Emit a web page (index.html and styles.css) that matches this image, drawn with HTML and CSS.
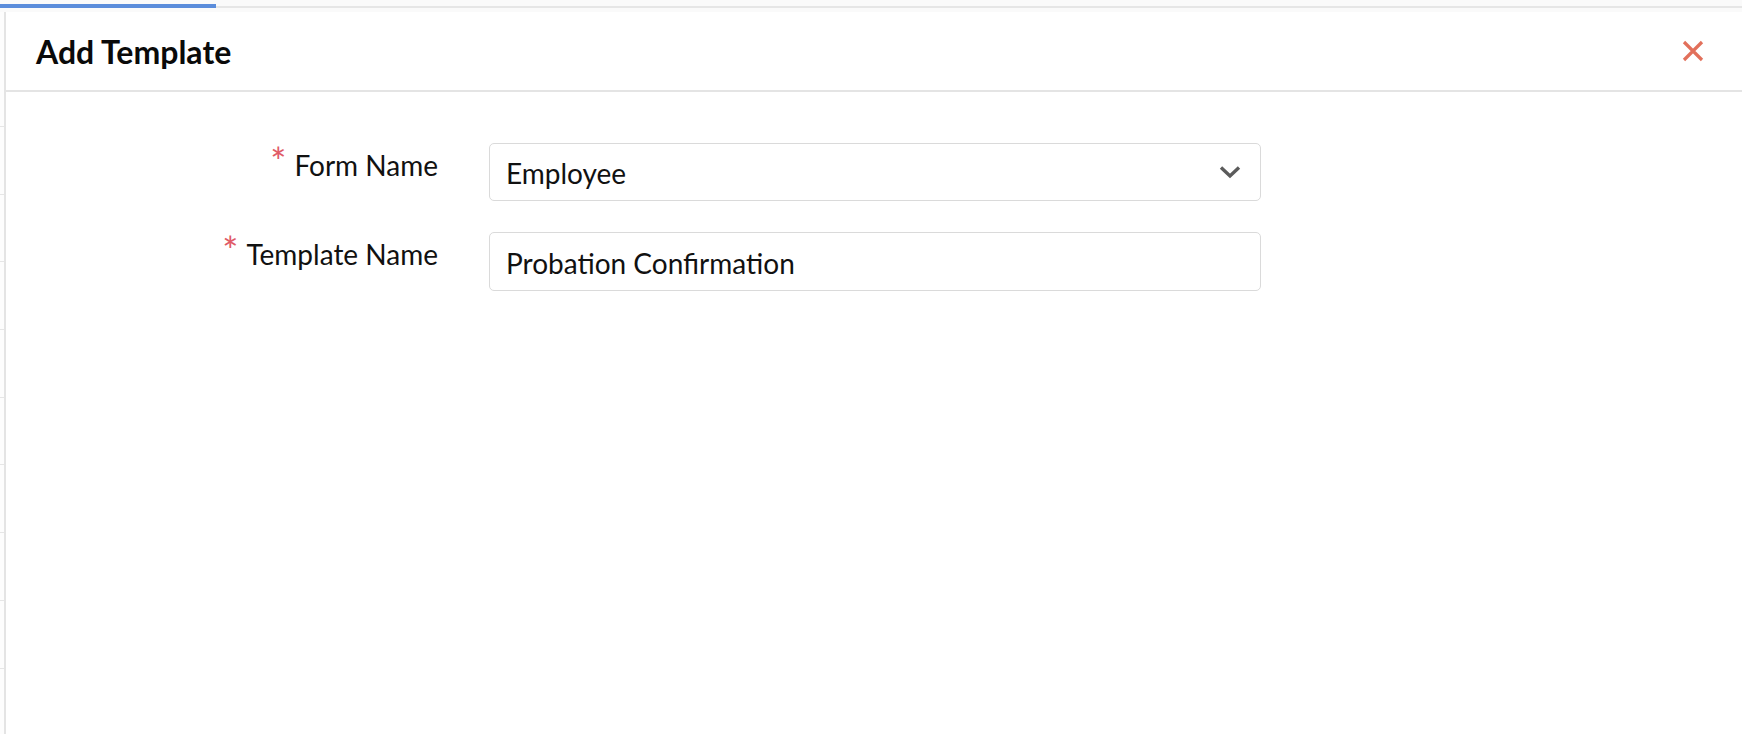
FILE: index.html
```html
<!DOCTYPE html>
<html lang="en">
<head>
<meta charset="utf-8">
<title>Add Template</title>
<link rel="stylesheet" href="styles.css">
</head>
<body>
<div class="topbar">
  <div class="track"><div class="progress"></div></div>
</div>
<div class="main">
  <div class="left-strip">
    <div class="strip-row first"></div>
    <div class="strip-row"></div>
    <div class="strip-row"></div>
    <div class="strip-row"></div>
    <div class="strip-row"></div>
    <div class="strip-row"></div>
    <div class="strip-row"></div>
    <div class="strip-row"></div>
    <div class="strip-row"></div>
  </div>
  <div class="panel">
    <div class="panel-header">
      <h1 class="title">Add Template</h1>
      <button class="close" aria-label="Close">
        <svg width="22" height="22" viewBox="0 0 22 22"><path d="M2 2 L20 20 M20 2 L2 20" stroke="#e2705b" stroke-width="3.2" stroke-linecap="butt" fill="none"/></svg>
      </button>
    </div>
    <div class="panel-body">
      <div class="form-grid">
        <label class="label"><span class="req">*</span>Form Name</label>
        <div class="field select">
          <span class="value">Employee</span>
          <svg class="chev" width="22" height="14" viewBox="0 0 22 14"><polyline points="2,2.5 11,11 20,2.5" stroke="#5b5b5b" stroke-width="3.4" fill="none"/></svg>
        </div>
        <label class="label"><span class="req">*</span>Template Name</label>
        <div class="field">
          <span class="value">Probation Confirmation</span>
        </div>
      </div>
    </div>
  </div>
</div>
</body>
</html>
```

FILE: styles.css
```css
* { box-sizing: border-box; }
html, body { margin: 0; padding: 0; }
body {
  width: 1742px;
  height: 734px;
  overflow: hidden;
  background: #fdfdfd;
  font-family: Lato, "Open Sans", sans-serif;
  color: #111;
}
.topbar {
  height: 12px;
  background: #fafafa;
  padding-top: 4px;
}
.track {
  height: 4px;
  border-bottom: 2px solid #e6e6e6;
  position: relative;
}
.progress {
  width: 216px;
  height: 4px;
  background: #5b8ddb;
}
.main {
  display: flex;
  height: 722px;
}
.left-strip {
  width: 4px;
  display: flex;
  flex-direction: column;
}
.strip-row {
  height: 67.7px;
  flex: none;
  border-bottom: 1px solid #e6e6e6;
}
.strip-row.first { height: 115px; }
.panel {
  flex: 1;
  background: #fff;
  border-left: 2px solid #e4e4e4;
  display: flex;
  flex-direction: column;
}
.panel-header {
  height: 80px;
  border-bottom: 2px solid #e4e4e4;
  display: flex;
  align-items: center;
  justify-content: space-between;
  padding: 2px 38px 0 30px;
}
.title {
  margin: 0;
  font-size: 32px;
  font-weight: 700;
  color: #0a0a0a;
  line-height: 38px;
}
.close {
  border: 0;
  background: none;
  padding: 0;
  width: 22px;
  height: 22px;
  display: flex;
  margin-top: -2px;
}
.panel-body {
  padding-top: 51px;
}
.form-grid {
  display: grid;
  grid-template-columns: 432px 772px;
  column-gap: 51px;
  row-gap: 31px;
  align-items: start;
}
.label {
  justify-self: end;
  font-size: 28px;
  line-height: 34px;
  padding-top: 5px;
  color: #111;
  white-space: nowrap;
}
.req {
  color: #e05a66;
  font-size: 38px;
  line-height: 0;
  margin-right: 8px;
  position: relative;
  top: 0;
}
.field {
  height: 58px;
  border: 1px solid #dadada;
  border-radius: 5px;
  display: flex;
  align-items: center;
  justify-content: space-between;
  padding: 0 19px 0 16px;
  background: #fff;
}
.field + .label + .field { height: 59px; }
.value {
  font-size: 28px;
  line-height: 34px;
  color: #111;
  padding-top: 2px;
}
.chev { display: block; }
```
